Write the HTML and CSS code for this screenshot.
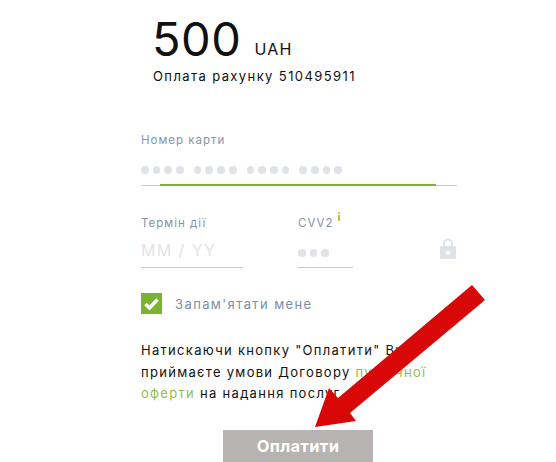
FILE: index.html
```html
<!doctype html>
<html>
<head>
  <link rel="stylesheet" href="styles.css">
</head>
<body>
  <div class="page">
    <div class="summary">
      <div class="amount"><span class="sum">500</span><span class="currency">UAH</span></div>
      <div class="invoice">Оплата рахунку 510495911</div>
    </div>

    <div class="field card">
      <label>Номер карти</label>
      <div class="dots">
        <span class="group"><i></i><i></i><i></i><i></i></span>
        <span class="group"><i></i><i></i><i></i><i></i></span>
        <span class="group"><i></i><i></i><i></i><i></i></span>
        <span class="group"><i></i><i></i><i></i><i></i></span>
      </div>
      <div class="focus"></div>
    </div>

    <div class="row">
      <div class="field expiry">
        <label>Термін дії</label>
        <div class="placeholder">MM / YY</div>
      </div>
      <div class="field cvv">
        <label>CVV2<sup>i</sup></label>
        <div class="dots"><span class="group"><i></i><i></i><i></i></span></div>
      </div>
      <svg class="lock" width="16" height="21" viewBox="0 0 16 21">
        <path fill="#dfe2e8" fill-rule="evenodd" d="M3 8V5.500a5 5 0 0 1 10 0V8h1.500A1.500 1.500 0 0 1 16 9.500v10a1.500 1.500 0 0 1-1.500 1.500h-13A1.500 1.500 0 0 1 0 19.500v-10A1.500 1.500 0 0 1 1.500 8zM5 8h6V5.500a3 3 0 0 0-6 0zM8 12.500a2 2 0 1 0 0 4 2 2 0 0 0 0-4z"/>
      </svg>
    </div>

    <div class="remember">
      <span class="check">
        <svg width="15" height="12" viewBox="0 0 15 12"><path fill="none" stroke="#fff" stroke-width="3.500" d="M1.500 6l4 4 8-8.500"/></svg>
      </span>
      <span class="remember-text">Запам'ятати мене</span>
    </div>

    <p class="terms">Натискаючи кнопку "Оплатити" Ви<br>приймаєте умови Договору <a>публічної<br>оферти</a> на надання послуг</p>

    <div class="actions"><button>Оплатити</button></div>
  </div>

  <svg class="arrow" width="556" height="462" viewBox="0 0 556 462">
    <polygon fill="#d90808" points="315,427 329,388 338,398 472,285 485,300 350,413 356,421"/>
  </svg>
</body>
</html>
```

FILE: styles.css
```css
body{
  margin: 0;
  background: #fff;
  font-family: "Inter", "Liberation Sans", sans-serif;
  color: #111;
  overflow: hidden;
}
.page{
  width: 316px;
  margin-left: 141px;
  height: 462px;
  overflow: hidden;
}
.summary{
  padding-left: 12px;
  padding-top: 10px;
}
.amount{
  display: flex;
  align-items: baseline;
  height: 58px;
}
.sum{
  font-size: 47px;
  line-height: 58px;
  font-weight: 400;
  letter-spacing: 0.5px;
  margin-left: -1px;
}
.currency{
  font-size: 16px;
  margin-left: 13px;
  letter-spacing: 1.200px;
  position: relative;
  top: -1px;
}
.invoice{
  font-size: 13px;
  letter-spacing: 1.400px;
  line-height: 16px;
}
label{
  display: block;
  font-size: 11.500px;
  letter-spacing: 1px;
  color: #8595a8;
  line-height: 14px;
}
.field.card{
  margin-top: 49px;
  border-bottom: 1px solid #c9c9c9;
  height: 52px;
  position: relative;
}
.dots{
  display: flex;
  gap: 10px;
  margin-top: 19px;
}
.group{
  display: flex;
  gap: 4px;
}
.group i{
  width: 7.700px;
  height: 7.700px;
  border-radius: 50%;
  background: #dfe2e8;
}
.focus{
  position: absolute;
  left: 19px;
  bottom: -1px;
  width: 276px;
  height: 2px;
  background: #7ab32e;
}
.row{
  display: flex;
  margin-top: 30px;
  align-items: flex-start;
}
.expiry{
  width: 102px;
  height: 51px;
  border-bottom: 1px solid #c9c9c9;
}
.placeholder{
  font-size: 16px;
  letter-spacing: 1.400px;
  color: #e2e4e9;
  margin-top: 10px;
  line-height: 20px;
}
.cvv{
  width: 55px;
  height: 51px;
  margin-left: 55px;
  border-bottom: 1px solid #c9c9c9;
}
.cvv sup{
  color: #9ab82a;
  font-size: 11px;
  font-weight: 700;
  margin-left: 4px;
  line-height: 0;
  position: relative;
  top: -1px;
}
.lock{
  margin-left: 87px;
  margin-top: 22px;
}
.remember{
  display: flex;
  align-items: center;
  margin-top: 25px;
}
.check{
  width: 21px;
  height: 21px;
  background: #7ab32e;
  display: flex;
  align-items: center;
  justify-content: center;
}
.remember-text{
  margin-left: 13px;
  font-size: 13px;
  letter-spacing: 1.400px;
  color: #7d8da3;
}
.terms{
  margin: 26px 0 0;
  font-size: 13px;
  line-height: 21.500px;
  letter-spacing: 1.300px;
}
.terms a{
  color: #8fbc4a;
}
.actions{
  display: flex;
  padding-left: 82px;
  margin-top: 25px;
}
button{
  width: 150px;
  height: 32px;
  border: 0;
  background: #b8b3b3;
  color: #fff;
  font-family: "Inter", "Liberation Sans", sans-serif;
  font-size: 16.500px;
  font-weight: 700;
  letter-spacing: 0.300px;
}
.arrow{
  position: absolute;
  left: 0;
  top: 0;
}
```
